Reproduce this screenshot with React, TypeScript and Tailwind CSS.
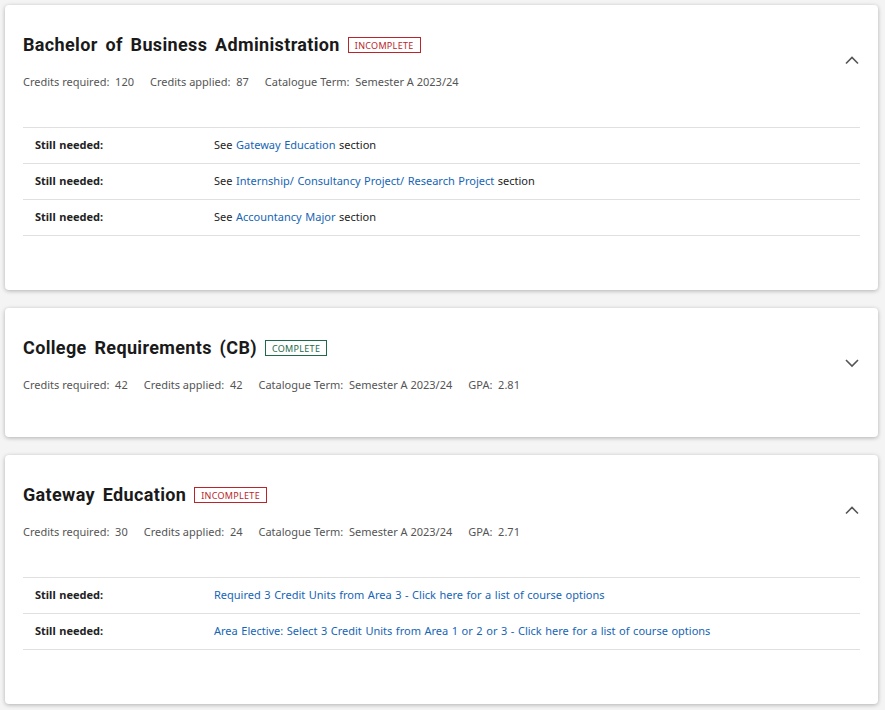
import React from "react";

type Row = { pre?: string; link: string; post?: string };

type Section = {
  title: string;
  complete: boolean;
  open: boolean;
  meta: [string, string][];
  rows: Row[];
};

const sections: Section[] = [
  {
    title: "Bachelor of Business Administration",
    complete: false,
    open: true,
    meta: [
      ["Credits required:", "120"],
      ["Credits applied:", "87"],
      ["Catalogue Term:", "Semester A 2023/24"],
    ],
    rows: [
      { pre: "See ", link: "Gateway Education", post: " section" },
      { pre: "See ", link: "Internship/ Consultancy Project/ Research Project", post: " section" },
      { pre: "See ", link: "Accountancy Major", post: " section" },
    ],
  },
  {
    title: "College Requirements (CB)",
    complete: true,
    open: false,
    meta: [
      ["Credits required:", "42"],
      ["Credits applied:", "42"],
      ["Catalogue Term:", "Semester A 2023/24"],
      ["GPA:", "2.81"],
    ],
    rows: [],
  },
  {
    title: "Gateway Education",
    complete: false,
    open: true,
    meta: [
      ["Credits required:", "30"],
      ["Credits applied:", "24"],
      ["Catalogue Term:", "Semester A 2023/24"],
      ["GPA:", "2.71"],
    ],
    rows: [
      { link: "Required 3 Credit Units from Area 3 - Click here for a list of course options" },
      { link: "Area Elective: Select 3 Credit Units from Area 1 or 2 or 3 - Click here for a list of course options" },
    ],
  },
];

function Chevron({ up }: { up: boolean }) {
  return (
    <svg width="16" height="10" viewBox="0 0 16 10" fill="none" className="text-[#555]">
      <path
        d={up ? "M2 8.5 L8 2.5 L14 8.5" : "M2 2 L8 8 L14 2"}
        stroke="currentColor"
        strokeWidth="1.6"
      />
    </svg>
  );
}

function Badge({ complete }: { complete: boolean }) {
  return complete ? (
    <span className="ml-[8px] inline-flex h-[16px] items-center border border-[#1e6b4a] px-[6px] text-[9px] leading-none tracking-[0.3px] text-[#1e6b4a]">
      COMPLETE
    </span>
  ) : (
    <span className="ml-[8px] inline-flex h-[16px] items-center border border-[#b8262b] px-[6px] text-[9px] leading-none tracking-[0.3px] text-[#b8262b]">
      INCOMPLETE
    </span>
  );
}

function Card({ s }: { s: Section }) {
  return (
    <div className="rounded-[4px] bg-white shadow-[0_1px_4px_rgba(0,0,0,0.28)]">
      <div className="flex items-center justify-between pl-[18px] pr-[18px]">
        <div className="pt-[29px]">
          <div className="flex items-center">
            <h2 className="font-['Roboto'] text-[18px] font-bold leading-[22px] tracking-[0.35px] text-[#1a1a1a] [word-spacing:3px]">
              {s.title}
            </h2>
            <Badge complete={s.complete} />
          </div>
          <div className="mt-[18px] flex gap-[16px] text-[11px] leading-[16px] text-[#555]">
            {s.meta.map(([k, v]) => (
              <span key={k}>
                {k}&nbsp;&nbsp;{v}
              </span>
            ))}
          </div>
        </div>
        <div className="pt-[24px]">
          <Chevron up={s.open} />
        </div>
      </div>
      {s.rows.length > 0 ? (
        <div className="mx-[18px] mt-[37px] mb-[54px] border-t border-[#e0e0e0]">
          {s.rows.map((r, i) => (
            <div
              key={i}
              className="flex h-[36px] items-center border-b border-[#e0e0e0] text-[11px] text-[#222] [word-spacing:0.7px]"
            >
              <div className="w-[191px] pl-[12px] font-bold">Still needed:</div>
              <div>
                {r.pre}
                <span className="text-[#1565b5]">{r.link}</span>
                {r.post}
              </div>
            </div>
          ))}
        </div>
      ) : (
        <div className="h-[44px]" />
      )}
    </div>
  );
}

export default function App() {
  return (
    <div className="min-h-[710px] bg-[#f4f4f4] px-[5px] pt-[5px] pr-[7px] font-['Noto_Sans',sans-serif]">
      <div className="flex flex-col gap-[18px]">
        {sections.map((s) => (
          <Card key={s.title} s={s} />
        ))}
      </div>
    </div>
  );
}
